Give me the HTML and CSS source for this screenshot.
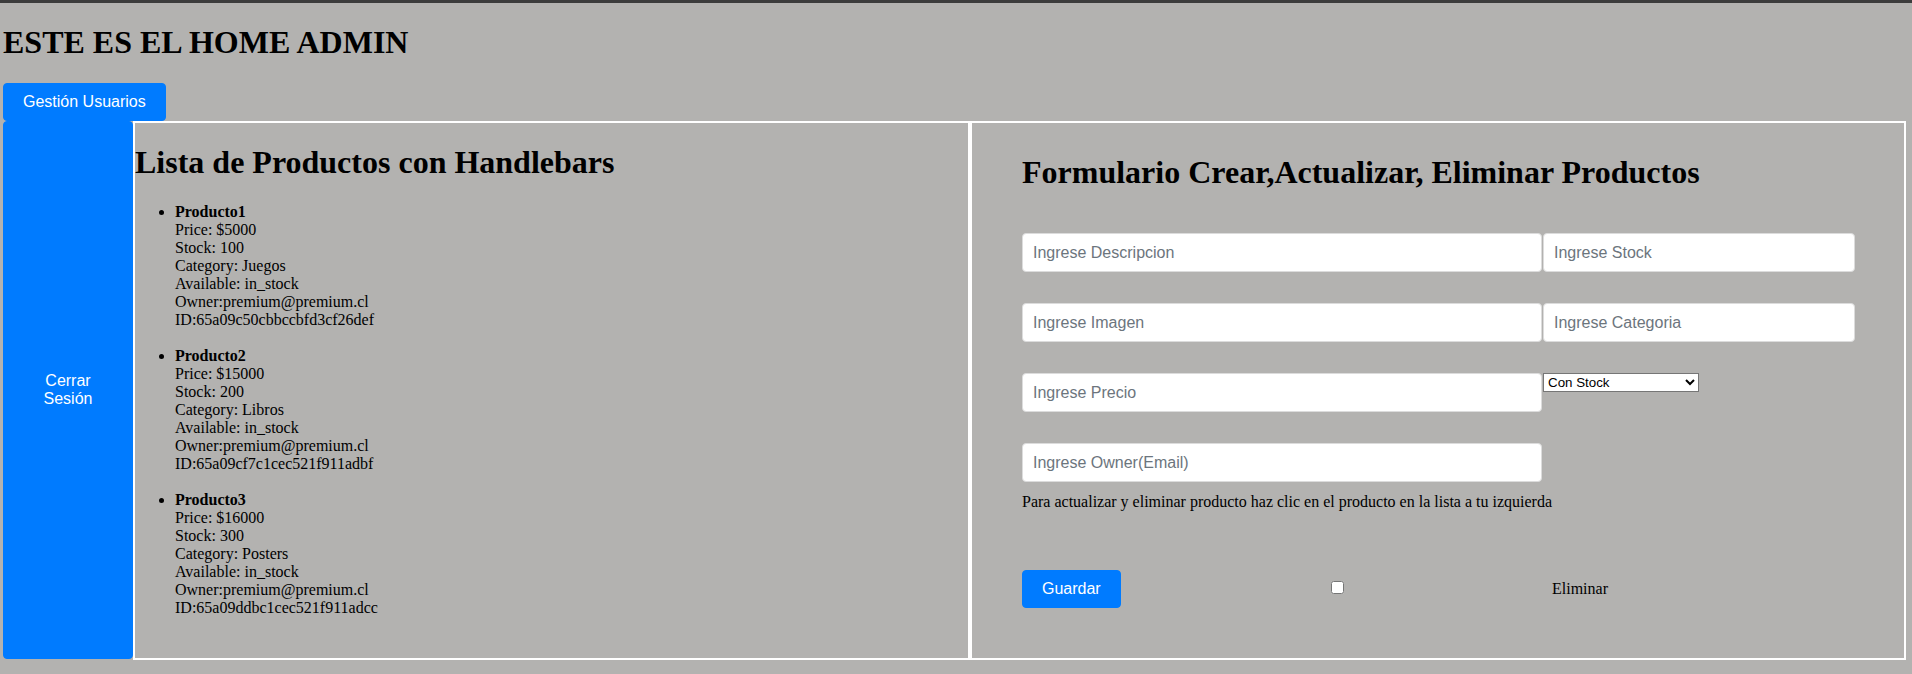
FILE: index.html
```html
<!DOCTYPE html>
<html lang="es">
<head>
<meta charset="utf-8">
<title>Home Admin</title>
<link rel="stylesheet" href="styles.css">
</head>
<body>
<div class="topbar"></div>
<main class="page">
  <h1 class="title">ESTE ES EL HOME ADMIN</h1>
  <nav class="nav">
    <button class="btn">Gestión Usuarios</button>
  </nav>
  <div class="layout">
    <button class="btn btn-side">Cerrar Sesión</button>
    <section class="panel products">
      <h2 class="heading">Lista de Productos con Handlebars</h2>
      <ul class="product-list">
        <li><strong>Producto1</strong><br>Price: $5000<br>Stock: 100<br>Category: Juegos<br>Available: in_stock<br>Owner:premium@premium.cl<br>ID:65a09c50cbbccbfd3cf26def</li>
        <li><strong>Producto2</strong><br>Price: $15000<br>Stock: 200<br>Category: Libros<br>Available: in_stock<br>Owner:premium@premium.cl<br>ID:65a09cf7c1cec521f911adbf</li>
        <li><strong>Producto3</strong><br>Price: $16000<br>Stock: 300<br>Category: Posters<br>Available: in_stock<br>Owner:premium@premium.cl<br>ID:65a09ddbc1cec521f911adcc</li>
      </ul>
    </section>
    <section class="panel form-panel">
      <h2 class="heading form-heading">Formulario Crear,Actualizar, Eliminar Productos</h2>
      <form class="form-grid">
        <input class="field" type="text" placeholder="Ingrese Descripcion">
        <input class="field" type="text" placeholder="Ingrese Stock">
        <input class="field" type="text" placeholder="Ingrese Imagen">
        <input class="field" type="text" placeholder="Ingrese Categoria">
        <input class="field" type="text" placeholder="Ingrese Precio">
        <select class="select"><option>Con Stock</option><option>Sin Stock</option></select>
        <input class="field" type="text" placeholder="Ingrese Owner(Email)">
      </form>
      <p class="hint">Para actualizar y eliminar producto haz clic en el producto en la lista a tu izquierda</p>
      <div class="actions">
        <div><button class="btn">Guardar</button></div>
        <div><input class="check" type="checkbox"></div>
        <div class="delete-label">Eliminar</div>
      </div>
    </section>
  </div>
</main>
</body>
</html>
```

FILE: styles.css
```css
html, body {
  margin: 0;
  padding: 0;
}
body {
  background: #b3b2b0;
  font-family: "Liberation Serif", "Times New Roman", serif;
  font-size: 16px;
  color: #000;
}
.topbar {
  height: 3px;
  background: #3c3c3c;
}
.page {
  padding: 0 6px 0 3px;
}
.title {
  font-size: 32px;
  font-weight: bold;
  margin: 21.44px 0;
}
.nav {
  display: flex;
}
.btn {
  font-family: "Liberation Sans", Arial, sans-serif;
  font-size: 16px;
  line-height: 24px;
  color: #fff;
  background: #007bff;
  border: 1px solid #007bff;
  border-radius: 4px;
  padding: 6px 19px;
  cursor: pointer;
}
.layout {
  display: grid;
  grid-template-columns: 130px 837px 1fr;
}
.btn-side {
  width: 130px;
  height: calc(100% - 1px);
  padding: 6px 20px;
  line-height: 18px;
}
.panel {
  border: 2px solid #fff;
  box-sizing: border-box;
}
.heading {
  font-size: 32px;
  font-weight: bold;
  margin: 21.44px 0;
}
.product-list {
  margin: 21.44px 0 0;
  padding-left: 40px;
  line-height: 18px;
}
.product-list li {
  margin-bottom: 18px;
}
.form-panel {
  padding: 10px 0 50px 50px;
}
.form-heading {
  margin-bottom: 0;
}
.form-grid {
  display: grid;
  grid-template-columns: 520px 312px;
  column-gap: 1px;
  row-gap: 31px;
  margin-top: 42px;
  align-items: start;
}
.field {
  box-sizing: border-box;
  height: 39px;
  margin: 0;
  padding: 0 10px;
  background: #fff;
  border: 1px solid #dcdcdc;
  border-radius: 4px;
  font-family: "Liberation Sans", Arial, sans-serif;
  font-size: 16px;
  color: #333;
}
.field::placeholder {
  color: #6c757d;
}
.select {
  width: 156px;
  height: 19px;
  margin: 0;
  font-family: "Liberation Sans", Arial, sans-serif;
  font-size: 13.33px;
  background: #fff;
  border: 1px solid #767676;
  border-radius: 0;
  color: #000;
}
.hint {
  margin: 11px 0 0;
  line-height: 18.4px;
}
.actions {
  display: grid;
  grid-template-columns: 305px 225px auto;
  align-items: center;
  margin-top: 58px;
}
.check {
  margin: 0 3px 2px 4px;
  width: 13px;
  height: 13px;
  display: block;
}
.delete-label {
  line-height: 18px;
}
```
